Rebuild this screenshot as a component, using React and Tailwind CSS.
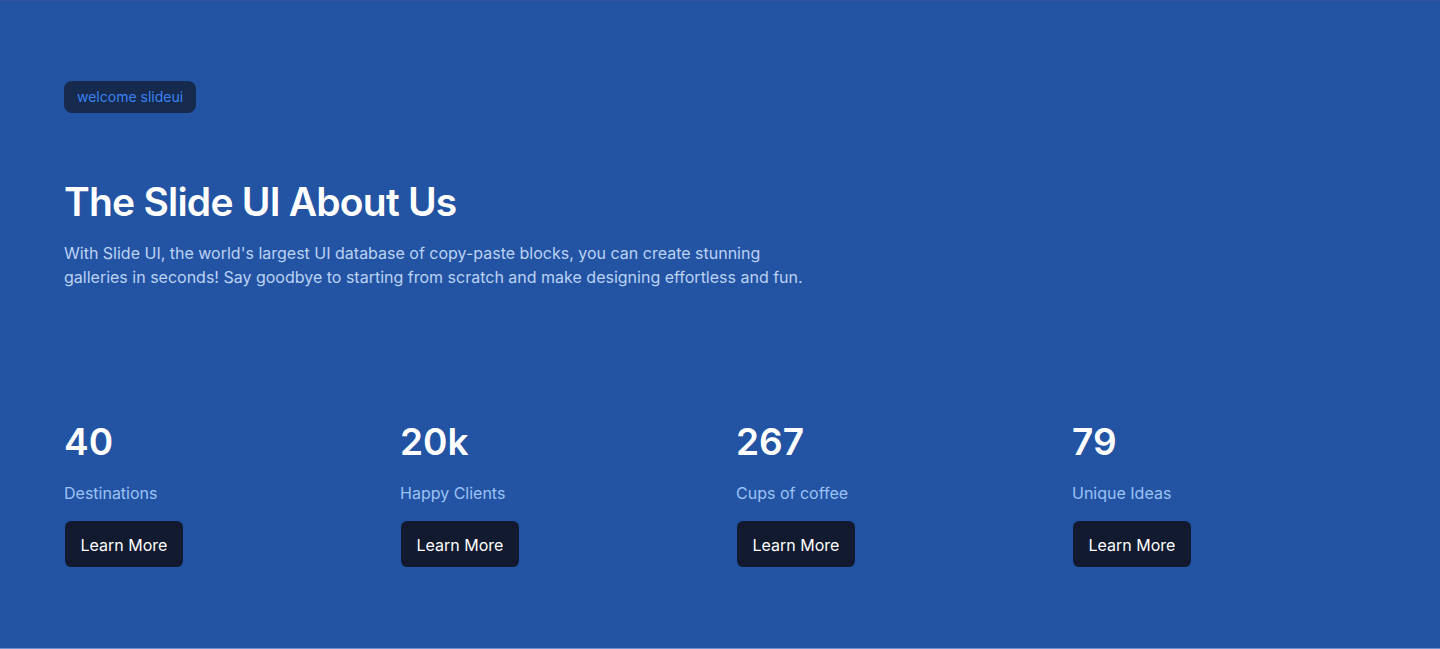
export default function App() {
  const stats = [
    { n: "40", l: "Destinations" },
    { n: "20k", l: "Happy Clients" },
    { n: "267", l: "Cups of coffee" },
    { n: "79", l: "Unique Ideas" },
  ];
  return (
    <section
      className="bg-[#2354a3] border-t border-t-[#3552a0] border-b border-b-[#6d8fd0] px-16 pt-20 pb-[81px]"
      style={{ fontFamily: "Inter, 'Noto Sans', sans-serif" }}
    >
      <div className="flex">
        <span className="rounded-lg bg-[#152a4c] px-[13px] py-1.5 text-sm leading-5 text-[#3b82f6]">
          welcome slideui
        </span>
      </div>
      <h1 className="mt-[67px] text-[39px] leading-[44px] font-semibold tracking-[-0.02em] text-white">
        The Slide UI About Us
      </h1>
      <p className="mt-[17px] max-w-[750px] text-base leading-6 text-[#bcd2f4]">
        With Slide UI, the world's largest UI database of copy-paste blocks, you can create stunning galleries in seconds! Say goodbye to starting from scratch and make designing effortless and fun.
      </p>
      <div className="mt-[131px] grid grid-cols-4 gap-8">
        {stats.map((s) => (
          <div key={s.n} className="flex flex-col items-start">
            <div className="text-[37px] leading-[44px] font-semibold text-white">{s.n}</div>
            <div className="mt-[17px] text-base leading-6 text-[#9cc2f5]">{s.l}</div>
            <button className="mt-4 ml-px rounded-md bg-[#111a2e] px-[15.5px] pt-3 pb-[10px] text-base leading-6 text-white">
              Learn More
            </button>
          </div>
        ))}
      </div>
    </section>
  );
}
